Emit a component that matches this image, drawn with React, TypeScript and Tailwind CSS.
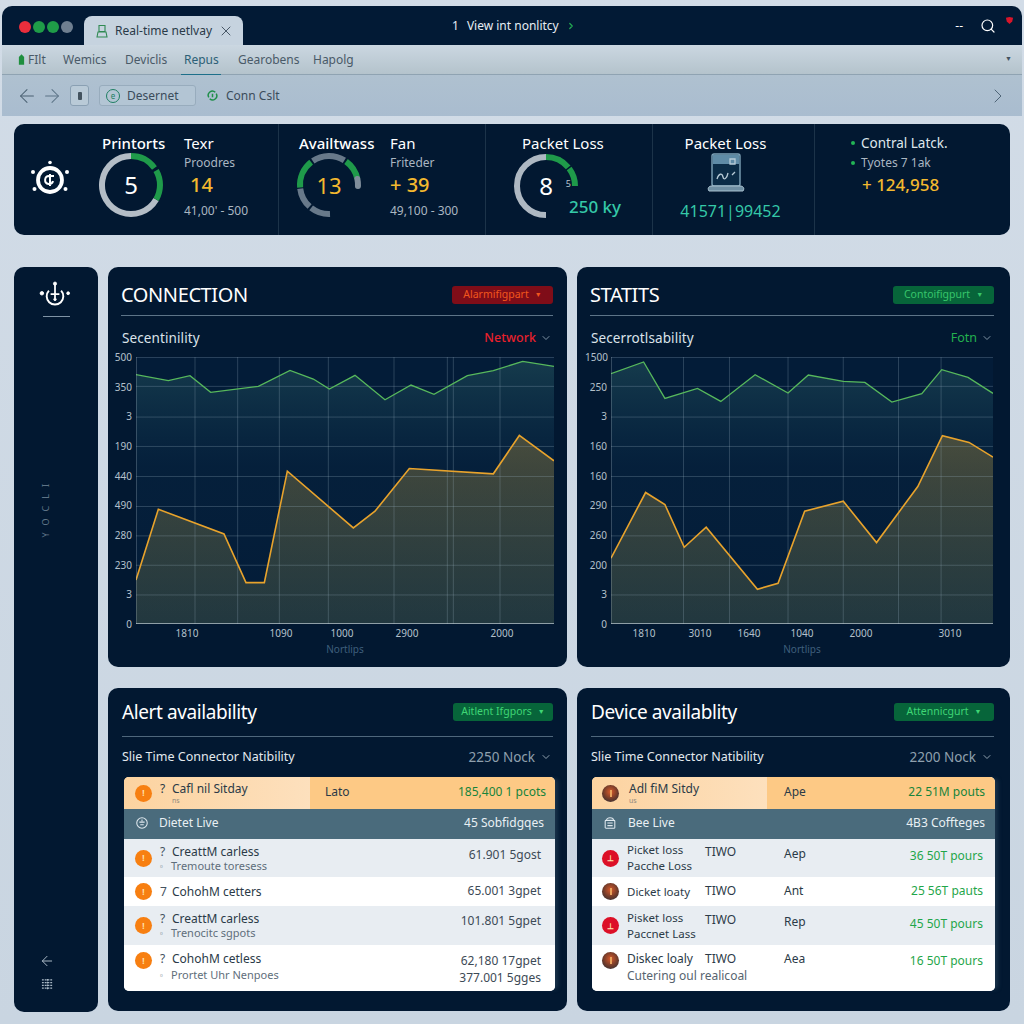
import { useId } from "react"
import { ArrowLeft, ArrowRight, ChevronDown, ChevronRight, Search, X } from "lucide-react"

const font = "font-['Noto_Sans','Liberation_Sans',sans-serif]"

// angles are clockwise from 12 o'clock
function arc(cx: number, cy: number, r: number, from: number, to: number) {
  const p = (a: number) => {
    const t = ((a - 90) * Math.PI) / 180
    return `${(cx + r * Math.cos(t)).toFixed(2)} ${(cy + r * Math.sin(t)).toFixed(2)}`
  }
  return `M${p(from)} A${r} ${r} 0 ${to - from > 180 ? 1 : 0} 1 ${p(to)}`
}

type Seg = { from: number; to: number; color: string; round?: boolean }

function Gauge({ segs, children, className }: { segs: Seg[]; children: React.ReactNode; className?: string }) {
  return (
    <div className={`relative h-[66px] w-[66px] shrink-0 ${className ?? ""}`}>
      <svg viewBox="0 0 66 66" className="h-full w-full">
        {segs.map((s, i) => (
          <path
            key={i}
            d={arc(33, 33, 29, s.from, s.to)}
            fill="none"
            stroke={s.color}
            strokeWidth={6}
            strokeLinecap={s.round ? "round" : "butt"}
          />
        ))}
      </svg>
      <div className="absolute inset-0 flex items-center justify-center">{children}</div>
    </div>
  )
}

function Logo({ className }: { className?: string }) {
  return (
    <svg viewBox="0 0 40 40" className={className} fill="none" stroke="#fff">
      <circle cx="20" cy="20" r="12" strokeWidth="3.8" />
      <path d="M24 16h-5a4 4 0 1 0 4 5M20 14v12" strokeWidth="2" />
      <g fill="#fff" stroke="none">
        <circle cx="20" cy="2.5" r="1.8" />
        <circle cx="3" cy="12" r="2" />
        <circle cx="37" cy="12" r="2" />
        <circle cx="4.5" cy="29" r="2" />
        <circle cx="35.5" cy="29" r="2" />
      </g>
    </svg>
  )
}

function SideLogo({ className }: { className?: string }) {
  return (
    <svg viewBox="0 0 36 32" className={className} fill="none" stroke="#fff">
      <path d="M11 11a9.5 9.5 0 1 0 14 0" strokeWidth="2.2" />
      <path d="M18 3v17M13 15h10" strokeWidth="2" />
      <circle cx="18" cy="3" r="1.8" fill="#fff" />
      <circle cx="3" cy="14" r="2" fill="#fff" />
      <circle cx="33" cy="14" r="1.6" fill="#fff" />
      <circle cx="18" cy="21" r="1.4" fill="#fff" />
    </svg>
  )
}

function Device({ className }: { className?: string }) {
  return (
    <svg viewBox="0 0 40 40" className={`h-[40px] w-[40px] ${className ?? ""}`} fill="none">
      <rect x="6" y="1" width="28" height="32" rx="2" fill="#0b2c47" stroke="#7fa3b8" strokeWidth="1.4" />
      <rect x="7" y="2" width="26" height="9" fill="#5f8ba6" />
      <path d="M11 26c2-6 5-6 6-2s4 1 5-4M26 22l3-3M24 6h5v5h-5z" stroke="#b8ccd8" strokeWidth="1.3" />
      <path d="M3 38c-2-3 0-5 3-5h28c3 0 5 2 3 5z" fill="#6f8fa3" stroke="#a9c0ce" />
    </svg>
  )
}

function Chart({
  width,
  verticals,
  green,
  orange,
  xticks,
  ylabels,
  labelShift,
}: {
  width: number
  verticals: number[]
  green: number[][]
  orange: number[][]
  xticks: [string, number][]
  ylabels: string[]
  labelShift: string
}) {
  const id = useId()
  const x0 = green[0][0]
  const x1 = green[green.length - 1][0]
  const line = (pts: number[][]) => pts.map((p) => p.join(",")).join(" ")
  const area = (pts: number[][]) => `${x0},1062 ${line(pts)} ${x1},1062`
  const rows = [350, 442, 530, 620, 710, 798, 886, 975]
  return (
    <div className={`flex items-start ${labelShift}`}>
      <div className="mt-[-6px] flex h-[279px] w-[26px] shrink-0 flex-col justify-between pr-[4px] text-right text-[10px] leading-[12px] text-[#b4c0cb]">
        {ylabels.map((l, i) => (
          <span key={i}>{l}</span>
        ))}
      </div>
      <div style={{ width }}>
        <svg viewBox={`${x0} 262 ${x1 - x0} 800`} preserveAspectRatio="none" className="block h-[267px] w-full">
          <defs>
            <linearGradient id={`${id}g`} x1="0" y1="0" x2="0" y2="1">
              <stop offset="0" stopColor="#2f6668" stopOpacity="0.42" />
              <stop offset="0.4" stopColor="#1c4a60" stopOpacity="0.08" />
              <stop offset="1" stopColor="#1c4a60" stopOpacity="0" />
            </linearGradient>
            <linearGradient id={`${id}o`} x1="0" y1="0" x2="0" y2="1">
              <stop offset="0" stopColor="#b8923a" stopOpacity="0.36" />
              <stop offset="1" stopColor="#7d8a55" stopOpacity="0.25" />
            </linearGradient>
          </defs>
          <rect x={x0} y="262" width={x1 - x0} height="800" fill="#031c38" />
          <polygon points={area(green)} fill={`url(#${id}g)`} />
          <polygon points={area(orange)} fill={`url(#${id}o)`} />
          {rows.map((y) => (
            <line key={y} x1={x0} x2={x1} y1={y} y2={y} stroke="#9db4c4" strokeOpacity="0.26" vectorEffect="non-scaling-stroke" />
          ))}
          {verticals.map((x) => (
            <line key={x} x1={x} x2={x} y1="262" y2="1062" stroke="#9db4c4" strokeOpacity="0.26" vectorEffect="non-scaling-stroke" />
          ))}
          <line x1={x0} x2={x1} y1="263" y2="263" stroke="#9db4c4" strokeOpacity="0.3" vectorEffect="non-scaling-stroke" />
          <polyline points={line(green)} fill="none" stroke="#57b85c" strokeWidth="1.3" vectorEffect="non-scaling-stroke" />
          <polyline points={line(orange)} fill="none" stroke="#e8a32c" strokeWidth="1.6" vectorEffect="non-scaling-stroke" />
          <line x1={x0} x2={x1} y1="1061" y2="1061" stroke="#c4d0da" strokeOpacity="0.8" vectorEffect="non-scaling-stroke" />
          <line x1={x0} x2={x0} y1="262" y2="1062" stroke="#c4d0da" strokeOpacity="0.5" vectorEffect="non-scaling-stroke" />
        </svg>
        <div className="relative mt-[2px] h-[14px] text-[10px] leading-[14px] text-[#b4c0cb]">
          {xticks.map(([t, x]) => (
            <span key={x} className="absolute -translate-x-1/2" style={{ left: x }}>
              {t}
            </span>
          ))}
        </div>
        <div className="mt-[3px] text-center text-[10px] leading-[12px] text-[#3f5f7c]">Nortlips</div>
      </div>
    </div>
  )
}

function ChartPanel({
  title,
  button,
  buttonTone,
  sub,
  pick,
  pickTone,
  pr,
  children,
}: {
  title: string
  button: string
  buttonTone: string
  sub: string
  pick: string
  pickTone: string
  pr: string
  children: React.ReactNode
}) {
  return (
    <section className={`h-[400px] min-w-0 rounded-[10px] bg-[#021831] pl-[13px] ${pr}`}>
      <div className="flex h-[49px] items-center justify-between border-b border-[#5d7488] pt-[8px]">
        <h2 className="text-[20px] leading-none tracking-[-0.4px] text-white">{title}</h2>
        <button className={`flex h-[18px] w-[101px] items-center justify-center gap-[6px] rounded-[3px] text-[10.5px] ${buttonTone}`}>
          {button}
          <span className="text-[7px]">▼</span>
        </button>
      </div>
      <div className="flex h-[41px] items-center justify-between pl-[1px] pr-[1px] pt-[3px]">
        <span className="text-[13.5px] tracking-[0.1px] text-[#dbe3ea]">{sub}</span>
        <span className={`flex items-center gap-[4px] text-[12.5px] ${pickTone}`}>
          {pick}
          <ChevronDown className="h-[12px] w-[12px] text-[#7f93a5]" />
        </span>
      </div>
      {children}
    </section>
  )
}

function Marker({ kind }: { kind: "orange" | "red" | "photo" }) {
  if (kind === "photo") {
    return (
      <span className="flex h-[17px] w-[17px] shrink-0 items-center justify-center rounded-full bg-[radial-gradient(circle_at_50%_40%,#d8592a,#6d3a2a_55%,#1f2c3a)]">
        <span className="h-[7px] w-[2px] bg-[#e9a35c]" />
      </span>
    )
  }
  return (
    <span
      className={`flex h-[17px] w-[17px] shrink-0 items-center justify-center rounded-full text-[8px] font-bold text-[#ffe3b0] ${
        kind === "orange" ? "bg-[#f77f11]" : "bg-[#dc1027]"
      }`}
    >
      {kind === "orange" ? "!" : "⊥"}
    </span>
  )
}

function LeftText({ title, sub, mark = "?", gap = "" }: { title: string; sub?: string; mark?: string; gap?: string }) {
  return (
    <div className="ml-[8px] min-w-0 text-[#2b3a47]">
      <div className="flex items-center text-[12px] leading-[14px]">
        <span className="w-[12px] text-[#44525f]">{mark}</span>
        {title}
      </div>
      {sub && (
        <div className={`flex items-center text-[11px] leading-[13px] text-[#5f6e7b] ${gap}`}>
          <span className="w-[11px] text-[8px] text-[#5f6e7b]">▫</span>
          {sub}
        </div>
      )}
    </div>
  )
}

function AlertTable() {
  return (
    <div className="overflow-hidden rounded-[5px] bg-white shadow-[5px_0_4px_-2px_rgba(70,100,120,0.35)]">
      <div className="flex h-[32px] bg-[#fdc985]">
        <div className="flex h-full w-[186px] items-center bg-gradient-to-r from-[#fcd3a0] to-[#fde0bd] pl-[11px]">
          <Marker kind="orange" />
          <div className="ml-[8px] text-[#2b3a47]">
            <div className="flex text-[12px] leading-[14px]">
              <span className="w-[12px]">?</span>Cafl nil Sitday
            </div>
            <div className="pl-[12px] text-[7px] leading-[9px] text-[#8f8a7e]">ns</div>
          </div>
        </div>
        <div className="flex flex-1 items-center justify-between pb-[3px] pl-[15px] pr-[9px] text-[12px] text-[#2b3a47]">
          <span>Lato</span>
          <span className="text-[#17843b]">185,400 1 pcots</span>
        </div>
      </div>
      <div className="flex h-[30px] items-center justify-between bg-[#4a6b7c] pb-[2px] pl-[11px] pr-[11px] text-[12px] text-[#e9f0f4]">
        <span className="flex items-center gap-[10px]">
          <svg viewBox="0 0 16 16" className="h-[14px] w-[14px]" fill="none" stroke="#dfe8ee" strokeWidth="1.2">
            <circle cx="8" cy="8" r="6" />
            <path d="M5 7h6M6 10h4M8 4v2" />
          </svg>
          Dietet Live
        </span>
        <span>45 Sobfidgqes</span>
      </div>
      <div className="flex h-[38px] items-center justify-between bg-[#e8edf2] pl-[11px] pr-[14px]">
        <div className="flex items-center">
          <Marker kind="orange" />
          <LeftText title="CreattM carless" sub="Tremoute toresess" />
        </div>
        <span className="mb-[6px] text-[12px] text-[#3d4a56]">61.901 5gost</span>
      </div>
      <div className="flex h-[29px] items-center justify-between bg-white pl-[11px] pr-[14px]">
        <div className="flex items-center">
          <Marker kind="orange" />
          <LeftText title="CohohM cetters" mark="7" />
        </div>
        <span className="mb-[2px] text-[12px] text-[#3d4a56]">65.001 3gpet</span>
      </div>
      <div className="flex h-[39px] items-center justify-between bg-[#e8edf2] pl-[11px] pr-[14px]">
        <div className="flex items-center">
          <Marker kind="orange" />
          <LeftText title="CreattM carless" sub="Trenocitc sgpots" />
        </div>
        <span className="mb-[10px] text-[12px] text-[#3d4a56]">101.801 5gpet</span>
      </div>
      <div className="flex h-[46px] items-start justify-between bg-white pl-[11px] pr-[14px] pt-[7px]">
        <div className="flex items-start">
          <Marker kind="orange" />
          <LeftText title="CohohM cetless" sub="Prortet Uhr Nenpoes" gap="mt-[2px]" />
        </div>
        <div className="text-right text-[12px] leading-[17px] text-[#3d4a56]">
          <div>62,180 17gpet</div>
          <div>377.001 5gges</div>
        </div>
      </div>
    </div>
  )
}

const deviceRows = [
  { h: "h-[38px] bg-[#e8edf2]", kind: "red", a: "Picket loss", b: "Pacche Loss", c: "Aep", d: "36 50T pours" },
  { h: "h-[29px] bg-white", kind: "photo", a: "Dicket loaty", b: "", c: "Ant", d: "25 56T pauts" },
  { h: "h-[39px] bg-[#e8edf2]", kind: "red", a: "Pisket loss", b: "Paccnet Lass", c: "Rep", d: "45 50T pours" },
] as const

function DeviceTable() {
  return (
    <div className="overflow-hidden rounded-[5px] bg-white shadow-[5px_0_4px_-2px_rgba(70,100,120,0.35)]">
      <div className="flex h-[32px] bg-[#fdc985]">
        <div className="flex h-full w-[175px] items-center bg-gradient-to-r from-[#fcd3a0] to-[#fde0bd] pl-[10px]">
          <Marker kind="photo" />
          <div className="ml-[10px] text-[#2b3a47]">
            <div className="text-[12px] leading-[14px]">Adl fiM Sitdy</div>
            <div className="text-[7px] leading-[9px] text-[#8f8a7e]">us</div>
          </div>
        </div>
        <div className="flex flex-1 items-center justify-between pb-[3px] pl-[17px] pr-[10px] text-[12px] text-[#2b3a47]">
          <span>Ape</span>
          <span className="text-[#17843b]">22 51M pouts</span>
        </div>
      </div>
      <div className="flex h-[30px] items-center justify-between bg-[#4a6b7c] pb-[2px] pl-[11px] pr-[10px] text-[12px] text-[#e9f0f4]">
        <span className="flex items-center gap-[11px]">
          <svg viewBox="0 0 16 16" className="h-[14px] w-[14px]" fill="none" stroke="#dfe8ee" strokeWidth="1.2">
            <rect x="2.5" y="5" width="11" height="9" rx="1" />
            <path d="M4 5c0-4 8-4 8 0M5 8h6M5 11h6" />
          </svg>
          Bee Live
        </span>
        <span>4B3 Coffteges</span>
      </div>
      {deviceRows.map((r) => (
        <div key={r.a} className={`flex items-center pl-[10px] pr-[12px] text-[12px] text-[#2b3a47] ${r.h}`}>
          <Marker kind={r.kind} />
          <div className="ml-[8px] w-[78px] text-[11.5px] leading-[16px]">
            <div>{r.a}</div>
            {r.b && <div>{r.b}</div>}
          </div>
          <span className={`w-[79px] ${r.b ? "mb-[12px]" : "mb-[2px]"}`}>TIWO</span>
          <span className={`${r.b ? "mb-[8px]" : "mb-[2px]"}`}>{r.c}</span>
          <span className={`ml-auto text-[#1fa64a] ${r.b ? "mb-[4px]" : "mb-[2px]"}`}>{r.d}</span>
        </div>
      ))}
      <div className="flex h-[46px] items-start bg-white pl-[10px] pr-[12px] pt-[7px] text-[12px] text-[#2b3a47]">
        <Marker kind="photo" />
        <div className="ml-[8px] w-[78px] whitespace-nowrap leading-[14px]">
          <div>Diskec loaly</div>
          <div className="mt-[3px] text-[#56646f]">Cutering oul realicoal</div>
        </div>
        <span className="w-[79px] leading-[14px]">TIWO</span>
        <span className="leading-[14px]">Aea</span>
        <span className="ml-auto mt-[2px] leading-[14px] text-[#1fa64a]">16 50T pours</span>
      </div>
    </div>
  )
}

function TablePanel({
  title,
  button,
  note,
  pr,
  tablePad,
  children,
}: {
  title: string
  button: string
  note: string
  pr: string
  tablePad: string
  children: React.ReactNode
}) {
  return (
    <section className={`h-[323px] min-w-0 rounded-[10px] bg-[#021831] pl-[14px] ${pr}`}>
      <div className="flex h-[49px] items-center justify-between border-b border-[#4f677c]">
        <h2 className="text-[19px] leading-none tracking-[-0.4px] text-white">{title}</h2>
        <button className="flex h-[18px] w-[100px] items-center justify-center gap-[6px] rounded-[3px] bg-[#07653a] text-[10.5px] text-[#3fd675]">
          {button}
          <span className="text-[7px]">▼</span>
        </button>
      </div>
      <div className="flex h-[40px] items-center justify-between pr-[1px]">
        <span className="text-[12.5px] text-[#e3e9ee]">Slie Time Connector Natibility</span>
        <span className="flex items-center gap-[5px] text-[13.5px] text-[#8fa0ae]">
          {note}
          <ChevronDown className="h-[12px] w-[12px]" />
        </span>
      </div>
      <div className={tablePad}>{children}</div>
    </section>
  )
}

export default function App() {
  return (
    <div className={`h-[1024px] w-[1024px] overflow-hidden bg-gradient-to-b from-[#d2dce7] to-[#c9d5e1] pt-[6px] ${font}`}>
      {/* Window chrome */}
      <div className="mx-[2px]">
        <div className="flex h-[39px] items-end rounded-t-[10px] bg-[#021a35] pl-[17px]">
          <div className="mb-[12px] flex w-[65px] shrink-0 gap-[2px]">
            <span className="h-[12px] w-[12px] rounded-full bg-[#ea2e3c]" />
            <span className="h-[12px] w-[12px] rounded-full bg-[#1f9c48]" />
            <span className="h-[12px] w-[12px] rounded-full bg-[#1f9c48]" />
            <span className="h-[12px] w-[12px] rounded-full bg-[#6f7f90]" />
          </div>
          <div className="flex h-[29px] w-[159px] items-center rounded-t-[8px] bg-[#c6d3df] pl-[11px] text-[12px] text-[#2a3a48]">
            <svg viewBox="0 0 14 14" className="mr-[6px] h-[14px] w-[14px]" fill="none" stroke="#2f8a52" strokeWidth="1.1">
              <path d="M4 1.5h6v6H4zM2 13l1-5h8l1 5z" />
            </svg>
            Real-time netlvay
            <X className="ml-[6px] h-[16px] w-[16px] text-[#3f4f5e]" strokeWidth={1.4} />
          </div>
          <div className="mb-[11px] ml-[209px] flex items-center gap-[7px] text-[12px] leading-[16px] text-[#e6edf3]">
            <span className="mr-[1px]">1</span>
            <span>View int nonlitcy</span>
            <ChevronRight className="h-[10px] w-[10px] text-[#22a652]" strokeWidth={3} />
          </div>
          <div className="mb-[10px] ml-auto flex items-center pr-[8px]">
            <span className="text-[12px] leading-[16px] text-white">--</span>
            <Search className="ml-[17px] h-[16px] w-[16px] text-white" strokeWidth={1.8} />
            <svg viewBox="0 0 10 10" className="mb-[10px] ml-[9px] h-[9px] w-[9px]">
              <path d="M1 2 5 1l4 1-1 4-3 3-3-3z" fill="#d8152a" />
            </svg>
          </div>
        </div>
        <div className="flex h-[30px] items-center border-b border-[#8fa3b2] bg-gradient-to-b from-[#cbd7e1] to-[#b4c3cc] pl-[16px] pr-[10px] text-[12px] text-[#4a5a68]">
          <svg viewBox="0 0 8 12" className="mr-[3px] h-[11px] w-[7px]">
            <path d="M4 0 7 3v9H1V3z" fill="#1f8f3e" />
          </svg>
          <span className="w-[35px]">FIlt</span>
          <span className="w-[62px]">Wemics</span>
          <span className="w-[59px]">Deviclis</span>
          <div className="relative w-[54px] text-[#2c5f76]">
            Repus
            <span className="absolute -bottom-[6px] left-[-3px] h-[1px] w-[40px] bg-[#1d6f8a]" />
          </div>
          <span className="w-[75px]">Gearobens</span>
          <span>Hapolg</span>
          <span className="ml-auto text-[7px] text-[#44525f]">▼</span>
        </div>
        <div className="flex h-[41px] items-center bg-gradient-to-b from-[#afc1d0] to-[#a9bccf] pl-[14px] pr-[12px] text-[12px] text-[#3b4c5b]">
          <ArrowLeft className="h-[22px] w-[22px] text-[#4a6072]" strokeWidth={1.1} />
          <ArrowRight className="ml-[3px] h-[22px] w-[22px] text-[#5b7386]" strokeWidth={1.1} />
          <span className="ml-[7px] flex h-[21px] w-[19px] items-center justify-center rounded-[3px] border border-[#8aa0b3] bg-[#b9cad7]">
            <span className="h-[8px] w-[4px] rounded-[1px] bg-[#43535f]" />
          </span>
          <span className="ml-[10px] flex h-[21px] w-[97px] items-center rounded-[3px] border border-[#98acbd] bg-[#b3c5d4] pl-[6px]">
            <span className="mr-[7px] flex h-[14px] w-[14px] items-center justify-center rounded-full border border-[#1f7f63] text-[8px] leading-none text-[#1f7f63]">e</span>
            Desernet
          </span>
          <svg viewBox="0 0 14 14" className="ml-[10px] mr-[7px] h-[13px] w-[13px]" fill="none" stroke="#1f8f4a" strokeWidth="1.6">
            <path d="M3 9a4.5 4.5 0 0 1 7-5.5M11 5a4.5 4.5 0 0 1-7 5.5M7 5v4" />
          </svg>
          Conn Cslt
          <ChevronRight className="ml-auto h-[24px] w-[24px] text-[#4f6577]" strokeWidth={1} />
        </div>
      </div>

      <main className="px-[14px] pt-[8px]">
        {/* Stat strip */}
        <section className="flex h-[111px] rounded-[10px] bg-[#021831] text-white">
          <div className="flex w-[265px] shrink-0 items-start border-r border-[#1c3349]">
            <Logo className="ml-[16px] mt-[36px] h-[40px] w-[40px] shrink-0" />
            <div className="ml-[32px] w-[82px] pt-[9px]">
              <div className="whitespace-nowrap text-[15px] font-medium leading-[20px]">Printorts</div>
              <Gauge
                className="ml-[-4px] mt-[-1px]"
                segs={[
                  { from: 120, to: 360, color: "#b4bdc6" },
                  { from: 0, to: 54, color: "#1f9a4a" },
                  { from: 60, to: 120, color: "#1f9a4a" },
                ]}
              >
                <span className="text-[24px] leading-none">5</span>
              </Gauge>
            </div>
            <div className="pt-[9px]">
              <div className="text-[15px] leading-[20px]">Texr</div>
              <div className="mt-[1px] text-[12px] leading-[18px] text-[#aab6c1]">Proodres</div>
              <div className="ml-[6px] text-[20px] font-medium leading-[26px] text-[#f4b92f]">14</div>
              <div className="mt-[4px] text-[12px] leading-[18px] text-[#aab6c1]">41,00' - 500</div>
            </div>
          </div>
          <div className="flex w-[207px] shrink-0 items-start border-r border-[#1c3349] pl-[20px]">
            <div className="w-[91px] pt-[9px]">
              <div className="whitespace-nowrap text-[15px] font-medium leading-[20px]">Availtwass</div>
              <Gauge
                className="ml-[-3px] mt-[-1px]"
                segs={[
                  { from: 265, to: 322, color: "#1f9a4a" },
                  { from: 326, to: 392, color: "#68798a" },
                  { from: 36, to: 78, color: "#1f9a4a" },
                  { from: 78, to: 92, color: "#7f8d9b", round: true },
                  { from: 222, to: 263, color: "#68798a" },
                  { from: 178, to: 218, color: "#68798a" },
                ]}
              >
                <span className="text-[22px] leading-none text-[#f4b92f]">13</span>
              </Gauge>
            </div>
            <div className="pt-[9px]">
              <div className="text-[15px] leading-[20px]">Fan</div>
              <div className="mt-[1px] text-[12px] leading-[18px] text-[#aab6c1]">Friteder</div>
              <div className="text-[20px] font-medium leading-[26px] text-[#f4b92f]">+ 39</div>
              <div className="mt-[4px] text-[12px] leading-[18px] text-[#aab6c1]">49,100 - 300</div>
            </div>
          </div>
          <div className="w-[167px] shrink-0 border-r border-[#1c3349] pl-[27px] pt-[9px]">
            <div className="whitespace-nowrap pl-[9px] text-[15px] leading-[20px]">Packet Loss</div>
            <div className="flex items-end">
              <Gauge
                segs={[
                  { from: 180, to: 360, color: "#aeb8c2" },
                  { from: 0, to: 50, color: "#1f9a4a" },
                  { from: 53, to: 90, color: "#1f9a4a" },
                ]}
              >
                <span className="text-[24px] leading-none">8</span>
                <span className="absolute right-[8px] top-[26px] text-[9px] leading-none text-[#b9c6d0]">5</span>
              </Gauge>
              <span className="ml-[-10px] text-[17px] font-medium leading-[24px] text-[#35c9a8]">250 ky</span>
            </div>
          </div>
          <div className="flex w-[162px] shrink-0 flex-col items-center border-r border-[#1c3349] pt-[9px]">
            <div className="mr-[16px] text-[15px] leading-[20px]">Packet Loss</div>
            <Device className="mr-[16px]" />
            <div className="mr-[6px] mt-[6px] text-[16px] leading-[24px] text-[#35c9a8]">41571|99452</div>
          </div>
          <div className="pl-[36px] pt-[9px]">
            <div className="flex items-center text-[13.5px] leading-[20px] text-[#dfe6ec]">
              <span className="mr-[6px] h-[4px] w-[4px] rounded-full bg-[#22b455]" />
              Contral Latck.
            </div>
            <div className="mt-[1px] flex items-center text-[12px] leading-[18px] text-[#aab6c1]">
              <span className="mr-[6px] h-[4px] w-[4px] rounded-full bg-[#22b455]" />
              Tyotes 7 1ak
            </div>
            <div className="ml-[11px] text-[17px] font-medium leading-[26px] text-[#f4b92f]">+ 124,958</div>
          </div>
        </section>

        <div className="mt-[32px] flex gap-[10px]">
          {/* Left rail */}
          <aside className="flex h-[745px] w-[84px] shrink-0 flex-col items-center rounded-[10px] bg-[#021831]">
            <SideLogo className="ml-[-2px] mt-[14px] h-[28px] w-[32px]" />
            <div className="mt-[7px] h-px w-[27px] bg-[#7f93a5]" />
            <span className="ml-[-20px] mt-[160px] rotate-180 text-[9px] tracking-[7px] text-[#5f7487] [writing-mode:vertical-rl]">YOCLI</span>
            <ArrowLeft className="ml-[-18px] mt-auto h-[16px] w-[16px] text-[#a9b8c5]" strokeWidth={1.5} />
            <svg viewBox="0 0 14 14" className="mb-[21px] ml-[-18px] mt-[9px] h-[13px] w-[13px]" fill="none" stroke="#a9b8c5" strokeWidth="1.3" strokeDasharray="2 1">
              <path d="M1 2h12M1 5h12M1 8h12M1 11h12M7 1v12" />
            </svg>
          </aside>

          <div className="grid min-w-0 flex-1 grid-cols-[459px_433px] gap-x-[10px] gap-y-[20px]">
            <ChartPanel
              title="CONNECTION"
              button="Alarmifigpart"
              buttonTone="bg-[#7f0d18] text-[#f2561d]"
              sub="Secentinility"
              pick="Network"
              pickTone="font-medium text-[#e7202c]"
              pr="pr-[14px]"
            >
              <Chart
                labelShift="-ml-[11px] -mr-[1px]"
                width={418}
                verticals={[285, 413, 538, 685, 882, 1042, 1060, 1200]}
                ylabels={["500", "350", "3", "190", "440", "490", "280", "230", "3", "0"]}
                green={[[108, 315], [205, 333], [270, 318], [332, 368], [475, 350], [570, 302], [640, 328], [688, 358], [765, 317], [855, 390], [933, 346], [1002, 374], [1102, 318], [1180, 303], [1268, 275], [1362, 290]]}
                orange={[[108, 930], [175, 718], [372, 792], [438, 938], [493, 938], [562, 604], [760, 774], [825, 724], [928, 596], [1180, 612], [1258, 497], [1362, 573]]}
                xticks={[["1810", 51], ["1090", 145], ["1000", 206], ["2900", 271], ["2000", 366]]}
              />
            </ChartPanel>
            <ChartPanel
              title="STATITS"
              button="Contoifigpurt"
              buttonTone="bg-[#07653a] text-[#37c56b]"
              sub="Secerrotlsability"
              pick="Fotn"
              pickTone="text-[#22b04f]"
              pr="pr-[16px]"
            >
              <Chart
                labelShift="-ml-[5px] -mr-[1px]"
                width={382}
                verticals={[340, 478, 654, 820, 986, 1114]}
                ylabels={["1500", "250", "3", "160", "160", "290", "260", "200", "3", "0"]}
                green={[[122, 312], [220, 277], [284, 386], [382, 356], [452, 395], [555, 315], [654, 370], [715, 316], [820, 335], [885, 338], [966, 397], [1056, 372], [1116, 300], [1195, 323], [1270, 371]]}
                orange={[[122, 865], [226, 668], [284, 704], [342, 832], [408, 772], [562, 958], [624, 940], [704, 724], [820, 694], [920, 818], [1044, 650], [1118, 498], [1198, 518], [1270, 562]]}
                xticks={[["1810", 33], ["3010", 89], ["1640", 138], ["1040", 191], ["2000", 250], ["3010", 339]]}
              />
            </ChartPanel>
            <TablePanel title="Alert availability" button="Aitlent Ifgpors" note="2250 Nock" pr="pr-[14px]" tablePad="ml-[2px] mr-[-2px]">
              <AlertTable />
            </TablePanel>
            <TablePanel title="Device availablity" button="Attennicgurt" note="2200 Nock" pr="pr-[16px]" tablePad="mr-[-1px] ml-[1px]">
              <DeviceTable />
            </TablePanel>
          </div>
        </div>
      </main>
    </div>
  )
}
